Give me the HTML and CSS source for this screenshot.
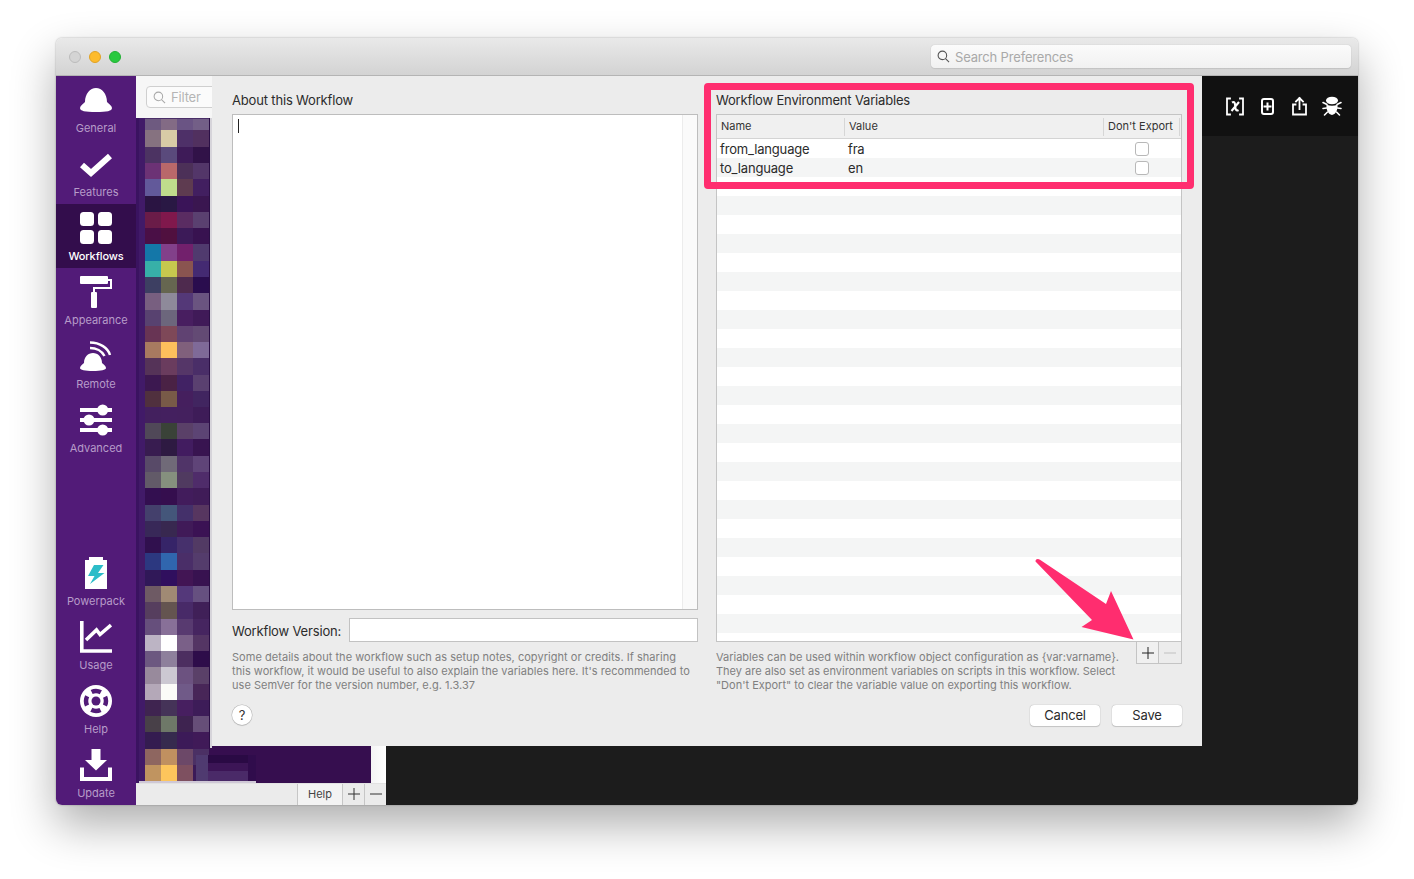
FILE: index.html
```html
<!DOCTYPE html>
<html lang="en">
<head>
<meta charset="utf-8">
<title>Alfred Preferences</title>
<link rel="stylesheet" href="styles.css">
</head>
<body>
<div class="window">
  <header class="titlebar">
    <div class="lights">
      <span class="light light-off"></span>
      <span class="light light-min"></span>
      <span class="light light-max"></span>
    </div>
    <div class="search">
      <svg class="search-icon" viewBox="0 0 14 14"><circle cx="5.8" cy="5.8" r="4.6"/><path d="M9.2 9.2 13 13"/></svg>
      <span>Search Preferences</span>
    </div>
  </header>
  <div class="body">
    <nav class="sidebar">
      <a class="nav-item">
        <svg class="nav-icon" viewBox="0 0 32 32"><path d="M0 24C0 22 3 20 5 18 5 10 10 4 16 4 22 4 27 10 27 18 29 20 32 22 32 24 32 27 27 28 16 28 5 28 0 27 0 24Z"/></svg>
        <span>General</span>
      </a>
      <a class="nav-item">
        <svg class="nav-icon" viewBox="0 0 32 32"><path class="line" stroke-width="6" d="M2 17 11 25 30 8"/></svg>
        <span>Features</span>
      </a>
      <a class="nav-item nav-active">
        <svg class="nav-icon" viewBox="0 0 32 32"><rect width="14" height="14" rx="3.5"/><rect x="18" width="14" height="14" rx="3.5"/><rect y="18" width="14" height="14" rx="3.5"/><rect x="18" y="18" width="14" height="14" rx="3.5"/></svg>
        <span>Workflows</span>
      </a>
      <a class="nav-item">
        <svg class="nav-icon" viewBox="0 0 32 32"><rect width="28" height="8" rx="1"/><rect x="11" y="16" width="6" height="16" rx="1"/><path class="line" stroke-width="2" d="M28 4H31V12H14V17"/></svg>
        <span>Appearance</span>
      </a>
      <a class="nav-item">
        <svg class="nav-icon" viewBox="0 0 32 32"><path d="M0 28C0 26 2 25 4 23 4 17 8 13 13 13 18 13 22 17 22 23 24 25 26 26 26 28 26 30 21 31 13 31 5 31 0 30 0 28Z"/><path class="line" stroke-width="2.4" d="M10 2.500C20 2.500 28 8 30 15M10 8C16 8 22 11 24.500 16"/></svg>
        <span>Remote</span>
      </a>
      <a class="nav-item">
        <svg class="nav-icon" viewBox="0 0 32 32"><rect y="4" width="32" height="4"/><rect y="14" width="32" height="4"/><rect y="24" width="32" height="4"/><circle cx="22.700" cy="6" r="5.500"/><circle cx="9" cy="16" r="5.500"/><circle cx="22.700" cy="26" r="5.500"/></svg>
        <span>Advanced</span>
      </a>
      <a class="nav-item nav-push">
        <svg class="nav-icon" viewBox="0 0 32 32"><path d="M9 0H23V3H27V32H5V3H9Z"/><path class="bolt" d="M14 8H23.500L18 16H24.500L10 27 14.500 19H8Z"/></svg>
        <span>Powerpack</span>
      </a>
      <a class="nav-item">
        <svg class="nav-icon" viewBox="0 0 32 32"><path class="line" stroke-width="3.600" d="M1.800 0V30H32"/><path class="line" stroke-width="3.600" d="M6 19 16.500 9 20 13.500 31 4"/></svg>
        <span>Usage</span>
      </a>
      <a class="nav-item">
        <svg class="nav-icon" viewBox="0 0 32 32"><circle cx="16" cy="16" r="16"/><circle class="buoy-ring" cx="16" cy="16" r="10"/><circle class="buoy-core" cx="16" cy="16" r="4.500"/></svg>
        <span>Help</span>
      </a>
      <a class="nav-item">
        <svg class="nav-icon" viewBox="0 0 32 32"><path d="M11.500 0H20.500V11H27L16 21.500 5 11H11.500Z"/><path class="line" stroke-width="4" d="M2 18.500V30H30V18.500"/></svg>
        <span>Update</span>
      </a>
    </nav>
    <main class="main">
      <section class="list">
        <div class="filterbar">
          <div class="filter">
            <svg class="filter-icon" viewBox="0 0 14 14"><circle cx="5.800" cy="5.800" r="4.600"/><path d="M9.200 9.200 13 13"/></svg>
            <span>Filter</span>
          </div>
        </div>
        <div class="listing">
          <svg class="mosaic" viewBox="136 118 120 665">
            <rect class="base" x="136" y="118" width="3" height="665" fill="#3a1360"/>
            <rect class="base" x="139" y="118" width="6" height="665" fill="#411a68"/>
            <rect class="base" x="145" y="118" width="65" height="12" fill="#4a2e68"/>
            <g transform="translate(0 119)" class="tall"><rect x="145" fill="#6e5a80"/><rect x="161" fill="#836b85"/><rect x="177" fill="#6a5484"/><rect x="193" fill="#735f87"/></g>
            <g transform="translate(0 130)"><rect x="145" fill="#867280"/><rect x="161" fill="#d8cba6"/><rect x="177" fill="#4e3068"/><rect x="193" fill="#51305f"/></g>
            <g transform="translate(0 147)"><rect x="145" fill="#4c3362"/><rect x="161" fill="#5a4a7c"/><rect x="177" fill="#3e1b58"/><rect x="193" fill="#311248"/></g>
            <g transform="translate(0 163)"><rect x="145" fill="#6c3275"/><rect x="161" fill="#b9686a"/><rect x="177" fill="#4c3058"/><rect x="193" fill="#533669"/></g>
            <g transform="translate(0 179)"><rect x="145" fill="#62599a"/><rect x="161" fill="#bfdc8c"/><rect x="177" fill="#5e3b50"/><rect x="193" fill="#421f60"/></g>
            <g transform="translate(0 196)"><rect x="145" fill="#2a1442"/><rect x="161" fill="#291844"/><rect x="177" fill="#3a1458"/><rect x="193" fill="#3a1650"/></g>
            <g transform="translate(0 212)"><rect x="145" fill="#6a1c48"/><rect x="161" fill="#80184c"/><rect x="177" fill="#5a2c62"/><rect x="193" fill="#5a4070"/></g>
            <g transform="translate(0 228)"><rect x="145" fill="#4a0f46"/><rect x="161" fill="#50103f"/><rect x="177" fill="#3c1a58"/><rect x="193" fill="#381250"/></g>
            <g transform="translate(0 244)"><rect x="145" fill="#1477a8"/><rect x="161" fill="#82408a"/><rect x="177" fill="#72206c"/><rect x="193" fill="#503a6e"/></g>
            <g transform="translate(0 261)"><rect x="145" fill="#37b0a8"/><rect x="161" fill="#c6c84e"/><rect x="177" fill="#8a5450"/><rect x="193" fill="#442a72"/></g>
            <g transform="translate(0 277)"><rect x="145" fill="#3d3f62"/><rect x="161" fill="#666650"/><rect x="177" fill="#4e2a4e"/><rect x="193" fill="#2a0d4e"/></g>
            <g transform="translate(0 293)"><rect x="145" fill="#785f80"/><rect x="161" fill="#8e8a9a"/><rect x="177" fill="#543878"/><rect x="193" fill="#6a5480"/></g>
            <g transform="translate(0 310)"><rect x="145" fill="#584270"/><rect x="161" fill="#6c667c"/><rect x="177" fill="#481e60"/><rect x="193" fill="#401a58"/></g>
            <g transform="translate(0 326)"><rect x="145" fill="#683454"/><rect x="161" fill="#7e4858"/><rect x="177" fill="#604272"/><rect x="193" fill="#634a74"/></g>
            <g transform="translate(0 342)"><rect x="145" fill="#a87a60"/><rect x="161" fill="#fdc05c"/><rect x="177" fill="#80607c"/><rect x="193" fill="#7f6a98"/></g>
            <g transform="translate(0 358)"><rect x="145" fill="#553358"/><rect x="161" fill="#6a3c5e"/><rect x="177" fill="#553668"/><rect x="193" fill="#4a2e68"/></g>
            <g transform="translate(0 375)"><rect x="145" fill="#3c1850"/><rect x="161" fill="#4a2245"/><rect x="177" fill="#412264"/><rect x="193" fill="#5a4070"/></g>
            <g transform="translate(0 391)"><rect x="145" fill="#50303e"/><rect x="161" fill="#785a48"/><rect x="177" fill="#451f5e"/><rect x="193" fill="#412560"/></g>
            <g transform="translate(0 407)"><rect x="145" fill="#43205e"/><rect x="161" fill="#44205f"/><rect x="177" fill="#44205e"/><rect x="193" fill="#3e1c58"/></g>
            <g transform="translate(0 423)"><rect x="145" fill="#504858"/><rect x="161" fill="#3a4238"/><rect x="177" fill="#5a4068"/><rect x="193" fill="#5c4474"/></g>
            <g transform="translate(0 439)"><rect x="145" fill="#381c50"/><rect x="161" fill="#2e1a42"/><rect x="177" fill="#421c60"/><rect x="193" fill="#381450"/></g>
            <g transform="translate(0 456)"><rect x="145" fill="#584a68"/><rect x="161" fill="#706a78"/><rect x="177" fill="#503468"/><rect x="193" fill="#5f4478"/></g>
            <g transform="translate(0 472)"><rect x="145" fill="#625a68"/><rect x="161" fill="#85907e"/><rect x="177" fill="#503a60"/><rect x="193" fill="#4f2c6a"/></g>
            <g transform="translate(0 488)"><rect x="145" fill="#330f50"/><rect x="161" fill="#350e4e"/><rect x="177" fill="#421c5c"/><rect x="193" fill="#401c58"/></g>
            <g transform="translate(0 505)"><rect x="145" fill="#44406c"/><rect x="161" fill="#44567a"/><rect x="177" fill="#44306a"/><rect x="193" fill="#573660"/></g>
            <g transform="translate(0 521)"><rect x="145" fill="#382858"/><rect x="161" fill="#382850"/><rect x="177" fill="#401a58"/><rect x="193" fill="#3b1254"/></g>
            <g transform="translate(0 537)"><rect x="145" fill="#30104e"/><rect x="161" fill="#362468"/><rect x="177" fill="#46306c"/><rect x="193" fill="#523a64"/></g>
            <g transform="translate(0 553)"><rect x="145" fill="#2c3880"/><rect x="161" fill="#3066ae"/><rect x="177" fill="#4a2e68"/><rect x="193" fill="#543c6c"/></g>
            <g transform="translate(0 570)"><rect x="145" fill="#301858"/><rect x="161" fill="#300f5e"/><rect x="177" fill="#421554"/><rect x="193" fill="#381250"/></g>
            <g transform="translate(0 586)"><rect x="145" fill="#6e5a64"/><rect x="161" fill="#a08a74"/><rect x="177" fill="#54387a"/><rect x="193" fill="#665080"/></g>
            <g transform="translate(0 602)"><rect x="145" fill="#563e5e"/><rect x="161" fill="#645450"/><rect x="177" fill="#482a68"/><rect x="193" fill="#402058"/></g>
            <g transform="translate(0 619)"><rect x="145" fill="#664f7c"/><rect x="161" fill="#887098"/><rect x="177" fill="#583a70"/><rect x="193" fill="#462560"/></g>
            <g transform="translate(0 635)"><rect x="145" fill="#bcb4c4"/><rect x="161" fill="#ffffff"/><rect x="177" fill="#7a6088"/><rect x="193" fill="#543564"/></g>
            <g transform="translate(0 651)"><rect x="145" fill="#6c5880"/><rect x="161" fill="#8e809c"/><rect x="177" fill="#4c2e60"/><rect x="193" fill="#2e0d4a"/></g>
            <g transform="translate(0 667)"><rect x="145" fill="#988a9c"/><rect x="161" fill="#ccc8d2"/><rect x="177" fill="#6c5280"/><rect x="193" fill="#5a4068"/></g>
            <g transform="translate(0 684)"><rect x="145" fill="#b4a8b8"/><rect x="161" fill="#fbfbf8"/><rect x="177" fill="#705a88"/><rect x="193" fill="#482658"/></g>
            <g transform="translate(0 700)"><rect x="145" fill="#3f2450"/><rect x="161" fill="#453358"/><rect x="177" fill="#471f60"/><rect x="193" fill="#3d1c58"/></g>
            <g transform="translate(0 716)"><rect x="145" fill="#484048"/><rect x="161" fill="#6e7868"/><rect x="177" fill="#3e2350"/><rect x="193" fill="#664e78"/></g>
            <g transform="translate(0 732)"><rect x="145" fill="#341c50"/><rect x="161" fill="#362a4e"/><rect x="177" fill="#3c1a58"/><rect x="193" fill="#401a58"/></g>
            <g transform="translate(0 749)"><rect x="145" fill="#8e6660"/><rect x="161" fill="#c09060"/><rect x="177" fill="#6c4868"/><rect x="193" fill="#4b3064"/></g>
            <g transform="translate(0 765)"><rect x="145" fill="#c09460"/><rect x="161" fill="#fdc55c"/><rect x="177" fill="#7e5060"/><rect x="193" fill="#3b1a58"/></g>
            <rect class="base" x="209" y="118" width="1" height="630" fill="#2a0e45"/>
            <rect class="base" x="210" y="118" width="2" height="630" fill="#d6d4da"/>
            <rect class="base" x="196" y="755" width="12" height="26" fill="#4f3a70"/>
            <rect class="base" x="208" y="755" width="40" height="8" fill="#2a0a44"/>
            <rect class="base" x="208" y="763" width="40" height="8" fill="#3c1556"/>
            <rect class="base" x="208" y="771" width="40" height="10" fill="#4a2a68"/>
            <rect class="base" x="248" y="755" width="8" height="26" fill="#300c4c"/>
            <rect class="base" x="139" y="781" width="117" height="2" fill="#cfc8d6"/>
          </svg>
          <div class="fade"></div>
        </div>
        <div class="listfoot">
          <button class="foot-btn foot-help">Help</button>
          <button class="foot-btn foot-sym"><svg viewBox="0 0 12 12"><path d="M6 0V12M0 6H12"/></svg></button>
          <button class="foot-btn foot-sym"><svg viewBox="0 0 12 12"><path d="M0 6H12"/></svg></button>
        </div>
      </section>
      <section class="canvas">
        <div class="toolbar">
          <svg class="tool" viewBox="0 0 32 32"><path d="M11 8.500H8V24.500H11M21 8.500H24V24.500H21" stroke-width="1.800"/><path d="M13 12.500C15.500 11 16 13 16.200 16 16.400 19 17 21.500 19.500 20M20 12 12.500 21" stroke-width="2.100" stroke-linecap="butt"/></svg>
          <svg class="tool" viewBox="0 0 32 32"><rect x="11" y="9" width="11" height="15" rx="2" stroke-width="2"/><path d="M16.500 13.500V19.500M13.500 16.500H19.500" stroke-width="2"/></svg>
          <svg class="tool" viewBox="0 0 32 32"><path d="M12.500 14.500H10V24.500H23V14.500H20.500" stroke-width="1.800"/><path d="M16.500 19V8M13 11.500 16.500 8 20 11.500" stroke-width="1.800"/></svg>
          <svg class="tool" viewBox="0 0 32 32"><ellipse class="solid" cx="17" cy="10.500" rx="6" ry="3.800"/><path class="solid" d="M11.500 14.800C15 16 19 16 22.500 14.800 23 20 20.500 24.500 17 25 13.500 24.500 11 20 11.500 14.800Z"/><path d="M12 14.500 8 12.500M11.500 18 8 18.500M12.500 22 9.500 25M22 14.500 26 12.500M22.500 18 26 18.500M21.500 22 24.500 25" stroke-width="1.600" stroke-linecap="round"/></svg>
        </div>
      </section>
      <div class="dialog">
        <div class="pane">
          <h2 class="pane-title">About this Workflow</h2>
          <div class="about">
            <div class="about-text"><span class="caret"></span></div>
            <div class="about-track"></div>
          </div>
          <div class="version">
            <label class="version-label">Workflow Version:</label>
            <div class="version-input"></div>
          </div>
          <p class="note about-note">Some details about the workflow such as setup notes, copyright or credits. If sharing this workflow, it would be useful to also explain the variables here. It's recommended to use SemVer for the version number, e.g. 1.3.37</p>
          <div class="pane-foot">
            <button class="help-btn">?</button>
          </div>
        </div>
        <div class="pane">
          <h2 class="pane-title">Workflow Environment Variables</h2>
          <div class="vars">
            <div class="vars-row vars-head">
              <div class="head-cell">Name</div>
              <div class="head-cell">Value</div>
              <div class="head-cell">Don't Export</div>
            </div>
            <div class="vars-row vars-item">
              <div class="item-cell">from_language</div>
              <div class="item-cell">fra</div>
              <div class="item-check"><span class="check"></span></div>
            </div>
            <div class="vars-row vars-item vars-alt">
              <div class="item-cell">to_language</div>
              <div class="item-cell">en</div>
              <div class="item-check"><span class="check"></span></div>
            </div>
            <div class="vars-fill"></div>
          </div>
          <div class="vars-foot">
            <p class="note vars-note">Variables can be used within workflow object configuration as {var:varname}. They are also set as environment variables on scripts in this workflow. Select "Don't Export" to clear the variable value on exporting this workflow.</p>
            <div class="vars-tools">
              <button class="tool-btn tool-on"><svg viewBox="0 0 12 12"><path d="M6 0V12M0 6H12"/></svg></button>
              <button class="tool-btn tool-off"><svg viewBox="0 0 12 12"><path d="M0 6H12"/></svg></button>
            </div>
          </div>
          <div class="pane-foot pane-actions">
            <button class="action">Cancel</button>
            <button class="action">Save</button>
          </div>
        </div>
        <div class="callout"></div>
        <svg class="arrow" viewBox="1030 555 110 90"><path d="M1035.500 561.500C1035.500 559 1038 558.500 1040 559.800L1106 604 1111 591 1133.500 639.500 1081.500 627 1092 620Z"/></svg>
      </div>
    </main>
  </div>
</div>
</body>
</html>
```
FILE: styles.css
```css
* { box-sizing: border-box; }
html, body { margin: 0; height: 100%; background: #fff; }
body {
  padding: 38px 56px 74px;
  font-family: Inter, "Noto Sans", "Liberation Sans", sans-serif;
  font-size: 13px;
  letter-spacing: -.17px;
  color: #2b2b2b;
  overflow: hidden;
}
button { font: inherit; letter-spacing: inherit; margin: 0; padding: 0; }
h2, p { margin: 0; font-weight: 400; }

.window {
  height: 767px;
  display: flex;
  flex-direction: column;
  border-radius: 6px;
  overflow: hidden;
  box-shadow: 0 20px 45px rgba(0,0,0,.32), 0 0 2px rgba(0,0,0,.35);
}

.titlebar {
  height: 38px;
  flex: none;
  display: flex;
  align-items: center;
  justify-content: space-between;
  padding: 0 7px 0 13px;
  background: linear-gradient(#e9e9e9, #d3d3d3);
  border-bottom: 1px solid #b4b4b4;
}
.lights { display: flex; gap: 8px; }
.light { width: 12px; height: 12px; border-radius: 50%; }
.light-off { background: #d4d4d4; border: 1px solid #bcbcbc; }
.light-min { background: #fdbb2d; border: 1px solid #e0a226; }
.light-max { background: #29c93f; border: 1px solid #22b034; }
.search {
  width: 420px;
  height: 23px;
  display: flex;
  align-items: center;
  gap: 5px;
  padding-left: 6px;
  background: linear-gradient(#fbfbfb, #f1f1f1);
  border-radius: 4px;
  box-shadow: 0 0 1px #a8a8a8, 0 1px 1px rgba(0,0,0,.08);
  color: #a9a9a9;
}
.search-icon { width: 13px; height: 13px; fill: none; stroke: #555; stroke-width: 1.200; }

.body { flex: 1; min-height: 0; display: flex; }

.sidebar {
  width: 80px;
  flex: none;
  display: flex;
  flex-direction: column;
  background: #521b78;
}
.nav-item {
  height: 64px;
  flex: none;
  display: flex;
  flex-direction: column;
  align-items: center;
  padding-top: 8px;
  font-size: 11px;
  line-height: 14px;
  letter-spacing: 0;
  color: #b79cc9;
}
.nav-push { margin-top: auto; }
.nav-active { background: #330d4c; color: #fff; font-weight: 500; letter-spacing: -.1px; }
.nav-icon { width: 32px; height: 32px; flex: none; margin-bottom: 5px; fill: #fff; }
.nav-icon .line { fill: none; stroke: #fff; }
.nav-icon .bolt { fill: #2cbcc8; }
.nav-icon .buoy-ring { fill: none; stroke: #521b78; stroke-width: 4.500; stroke-dasharray: 9.500 6.200; stroke-dashoffset: 4.750; }
.nav-icon .buoy-core { fill: #521b78; }

.main { flex: 1; min-width: 0; display: flex; position: relative; }

.list { width: 250px; flex: none; display: flex; flex-direction: column; }
.filterbar { height: 42px; flex: none; background: #f6f6f6; padding: 10px 0 0 10px; overflow: hidden; }
.filter {
  width: 120px;
  height: 22px;
  display: flex;
  align-items: center;
  gap: 5px;
  padding-left: 6px;
  background: #fbfbfb;
  border: 1px solid #cfcfcf;
  border-radius: 4px;
  color: #b5b5b5;
}
.filter-icon { width: 13px; height: 13px; fill: none; stroke: #a8a8a8; stroke-width: 1.100; }
.listing { flex: 1; min-height: 0; display: flex; }
.mosaic { width: 120px; height: 665px; flex: none; display: block; background: #360e4f; shape-rendering: crispEdges; }
.mosaic g rect { width: 16px; height: 17px; }
.mosaic .tall rect { height: 11px; }
.fade { flex: 1; background: linear-gradient(90deg, #360e4f 0, #360e4f 115px, #f4f4f4 115px, #fff 130px); }
.listfoot {
  height: 22px;
  flex: none;
  display: flex;
  justify-content: flex-end;
  background: #ebebeb;
  border-top: 1px solid #e2e2e2;
}
.foot-btn {
  display: flex;
  align-items: center;
  justify-content: center;
  padding-bottom: 2px;
  border: 0;
  border-left: 1px solid #c6c6c6;
  background: transparent;
  color: #444;
  font-size: 11px;
  letter-spacing: 0;
}
.foot-help { width: 45px; background: #f3f3f3; }
.foot-sym { width: 22px; }
.foot-sym svg { width: 12px; height: 12px; fill: none; stroke: #333; stroke-width: 1; }

.canvas { flex: 1; min-width: 0; display: flex; flex-direction: column; align-items: flex-end; background: #1c1c1c; }
.toolbar {
  width: 156px;
  height: 60px;
  flex: none;
  display: flex;
  align-items: center;
  justify-content: flex-end;
  padding-right: 11px;
  background: #111;
}
.tool { width: 32px; height: 32px; fill: none; stroke: #fff; stroke-linecap: square; }
.tool .solid { fill: #fff; stroke: none; }

.dialog {
  position: absolute;
  left: 76px;
  top: 0;
  width: 990px;
  height: 670px;
  display: flex;
  gap: 18px;
  padding: 16px 20px 20px;
  background: #ececec;
}
.pane { flex: 1 1 0; min-width: 0; display: flex; flex-direction: column; }
.pane-title { height: 22px; flex: none; font-size: 13px; line-height: 16px; color: #2b2b2b; }

.about { flex: 1; min-height: 0; display: flex; background: #fff; border: 1px solid #bdbdbd; }
.about-text { flex: 1; padding: 4px 5px; }
.caret { display: block; width: 1px; height: 14px; background: #222; }
.about-track { width: 15px; flex: none; background: #fafafa; border-left: 1px solid #ececec; }

.version { height: 24px; flex: none; margin-top: 8px; display: flex; align-items: center; gap: 8px; }
.version-label { flex: none; width: 109px; padding-top: 2px; white-space: nowrap; }
.version-input { flex: 1; height: 24px; background: #fff; border: 1px solid #c2c2c2; }

.note { height: 42px; flex: none; margin-top: 8px; font-size: 11px; line-height: 14px; letter-spacing: 0; color: #808080; }
.about-note { padding-right: 5px; letter-spacing: .04px; }
.pane-foot { height: 21px; flex: none; margin-top: 13px; }
.pane-actions { display: flex; justify-content: flex-end; gap: 12px; }

.help-btn {
  width: 20px;
  height: 20px;
  display: block;
  border: 0;
  border-radius: 50%;
  background: #fff;
  box-shadow: 0 0 0 .5px #b5b5b5, 0 1px 1px rgba(0,0,0,.15);
  color: #333;
  font-size: 13px;
  line-height: 20px;
  text-align: center;
}
.action {
  width: 70px;
  height: 21px;
  padding-bottom: 2px;
  border: 0;
  border-radius: 4px;
  background: #fff;
  box-shadow: 0 0 1px #8e8e8e, 0 1px 1px rgba(0,0,0,.15);
  color: #2b2b2b;
  font-size: 13px;
}

.vars { flex: 1; min-height: 0; display: flex; flex-direction: column; background: #fff; border: 1px solid #c4c4c4; }
.vars-row { flex: none; display: grid; grid-template-columns: 128px 259px 1fr; }
.vars-head { height: 24px; align-items: center; background: #f0f0f0; border-bottom: 1px solid #d4d4d4; }
.head-cell { height: 18px; padding-left: 4px; font-size: 11px; line-height: 16px; letter-spacing: 0; color: #333; border-right: 1px solid #d6d6d6; }
.head-cell + .head-cell + .head-cell { margin-right: 1px; }
.vars-item { height: 19px; background: #fff; }
.vars-alt { background: #f4f5f5; }
.item-cell { padding-left: 3px; line-height: 20px; color: #2b2b2b; }
.item-check { display: flex; justify-content: center; padding: 3px 2px 0 0; }
.check { width: 14px; height: 14px; background: #fff; border: 1px solid #b8b8b8; border-radius: 3px; }
.vars-fill { flex: 1; background: repeating-linear-gradient(#fff 0, #fff 19px, #f4f5f5 19px, #f4f5f5 38px); }

.vars-foot { height: 50px; flex: none; display: flex; justify-content: space-between; align-items: flex-start; }
.vars-note { width: 410px; }
.vars-tools { display: flex; height: 22px; border: 1px solid #c4c4c4; border-top: 0; }
.tool-btn { width: 22px; display: flex; align-items: center; justify-content: center; border: 0; background: transparent; }
.tool-btn svg { width: 12px; height: 12px; fill: none; stroke-width: 1; }
.tool-on { background: #f0f0f0; border-right: 1px solid #c4c4c4; }
.tool-on svg { stroke: #222; }
.tool-off svg { stroke: #c0c0c0; }

.callout {
  position: absolute;
  left: 492px;
  top: 7px;
  width: 490px;
  height: 106px;
  border: 7px solid #ff2d6f;
  border-radius: 4px;
}
.arrow { position: absolute; left: 818px; top: 479px; width: 110px; height: 90px; fill: #ff2d6f; }
```
